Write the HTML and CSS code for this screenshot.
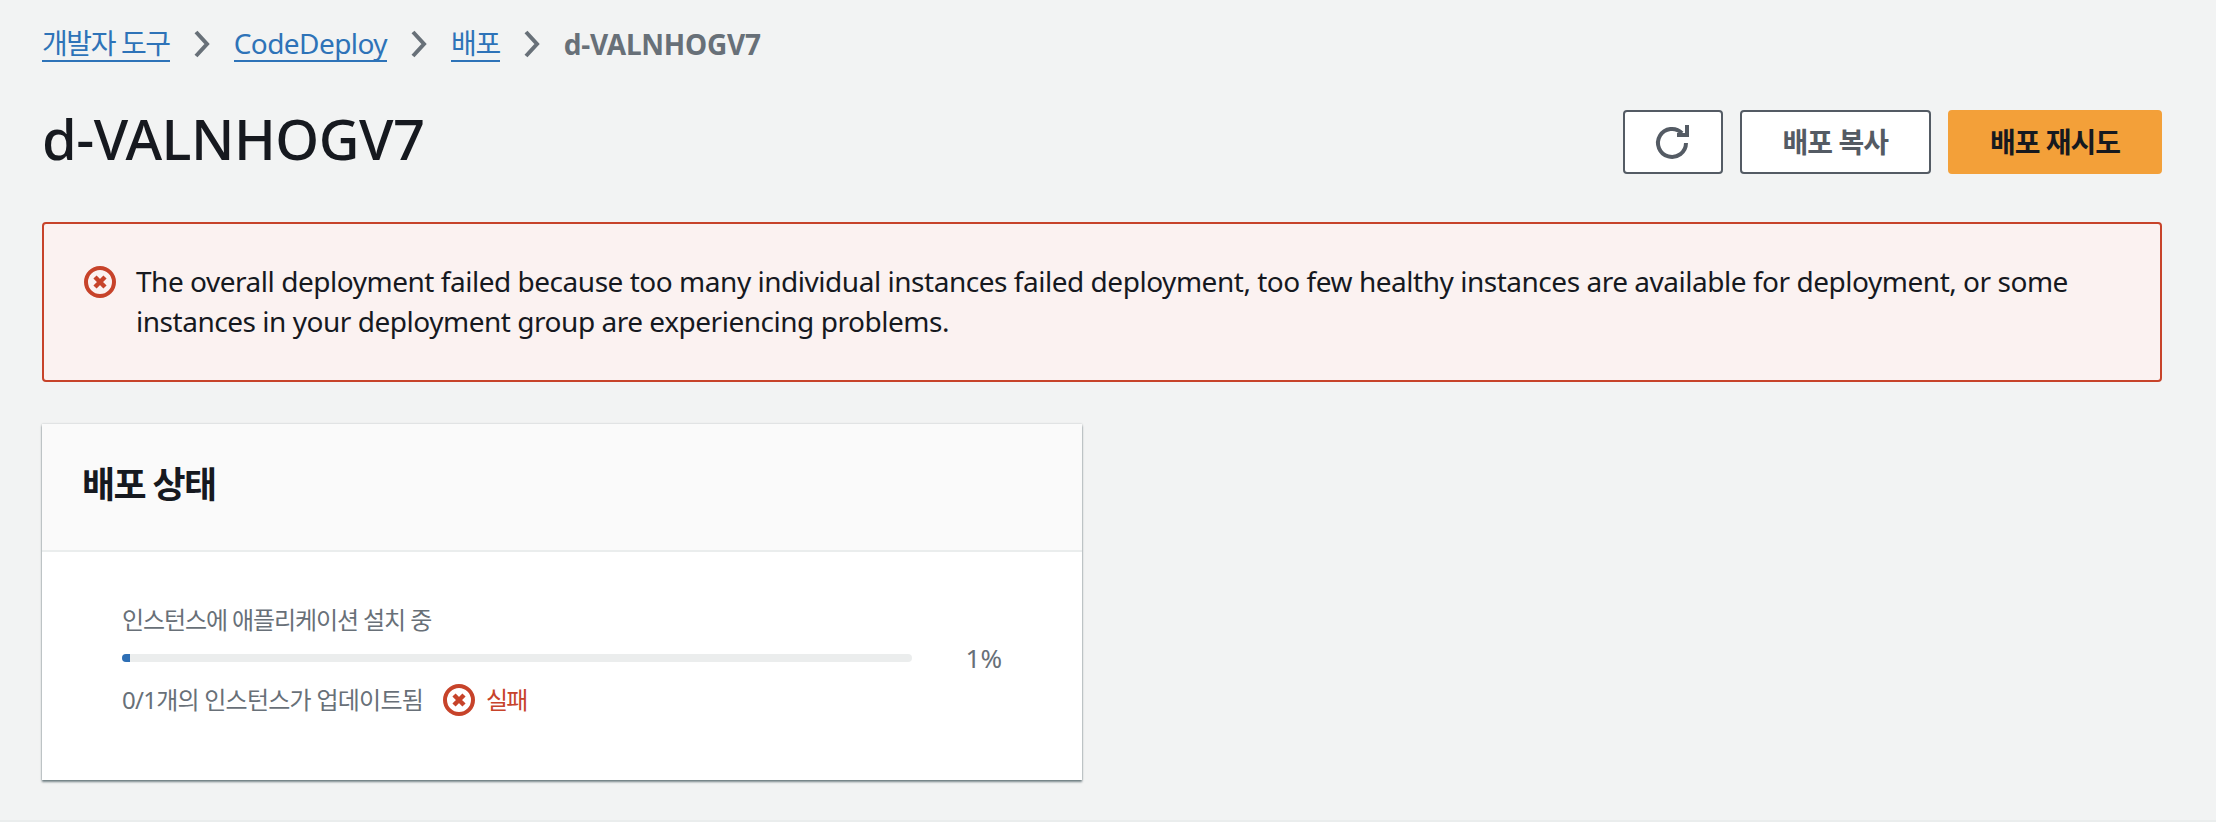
FILE: index.html
```html
<!DOCTYPE html>
<html lang="ko">
<head>
<meta charset="utf-8">
<title>d-VALNHOGV7</title>
<link rel="stylesheet" href="styles.css">
</head>
<body>
<main class="page">
  <nav class="crumbs">
    <a class="crumb crumb-ko" href="#">개발자 도구</a>
    <svg class="chev" viewBox="0 0 18 30"><path d="M3 3l11 12L3 27"/></svg>
    <a class="crumb crumb-en" href="#">CodeDeploy</a>
    <svg class="chev" viewBox="0 0 18 30"><path d="M3 3l11 12L3 27"/></svg>
    <a class="crumb crumb-ko" href="#">배포</a>
    <svg class="chev" viewBox="0 0 18 30"><path d="M3 3l11 12L3 27"/></svg>
    <span class="crumb-current">d-VALNHOGV7</span>
  </nav>
  <header class="head">
    <h1 class="title">d-VALNHOGV7</h1>
    <div class="actions">
      <button class="btn btn-icon" aria-label="새로 고침">
        <svg class="refresh" viewBox="0 0 34 34"><path d="M26 8.1A14 14 0 1 0 30 18"/><path d="M21 10H31V0"/></svg>
      </button>
      <button class="btn btn-normal">배포 복사</button>
      <button class="btn btn-primary">배포 재시도</button>
    </div>
  </header>
  <section class="alert">
    <svg class="err" viewBox="0 0 32 32"><circle cx="16" cy="16" r="14"/><path d="M11 11l10 10M21 11L11 21"/></svg>
    <p class="alert-text">The overall deployment failed because too many individual instances failed deployment, too few healthy instances are available for deployment, or some instances in your deployment group are experiencing problems.</p>
  </section>
  <section class="card">
    <h2 class="card-head">배포 상태</h2>
    <div class="card-body">
      <div class="label">인스턴스에 애플리케이션 설치 중</div>
      <div class="progress-row">
        <div class="track"><div class="fill" style="width:1%"></div></div>
        <span class="pct">1%</span>
      </div>
      <div class="status">
        <span class="status-text">0/1개의 인스턴스가 업데이트됨</span>
        <svg class="err" viewBox="0 0 32 32"><circle cx="16" cy="16" r="14"/><path d="M11 11l10 10M21 11L11 21"/></svg>
        <span class="failed">실패</span>
      </div>
    </div>
  </section>
  <div class="next-section"></div>
</main>
</body>
</html>
```
FILE: styles.css
```css
* { box-sizing: border-box; }
html, body { margin: 0; height: 822px; overflow: hidden; }
body {
  background: #f2f3f3;
  color: #16191f;
  font-family: "Noto Sans", "Noto Sans CJK KR", sans-serif;
  font-size: 28px;
  line-height: 40px;
}
.page { padding: 24px 54px 0 42px; }
.crumbs { display: flex; align-items: center; height: 40px; gap: 23px; }
.crumb { color: #2e73b8; text-decoration: none; border-bottom: 2px solid #2e73b8; line-height: 34px; height: 36px; }
.crumb-ko { letter-spacing: -1.4px; }
.crumb-en { letter-spacing: -.56px; }
.chev { width: 18px; height: 30px; fill: none; stroke: #687078; stroke-width: 4; }
.crumb-current { color: #687078; font-weight: 700; letter-spacing: -.25px; }
.head { display: flex; justify-content: space-between; align-items: center; margin-top: 46px; height: 64px; }
.title { margin: 0; padding-bottom: 8px; font-size: 56px; font-weight: 500; line-height: 64px; letter-spacing: -.5px; }
.actions { display: flex; gap: 17px; }
.btn {
  height: 64px;
  border-radius: 4px;
  font: 700 28px/40px "Noto Sans", "Noto Sans CJK KR", sans-serif;
  letter-spacing: -1px;
  padding: 0 40px;
  border: 2px solid #545b64;
  background: #fff;
  color: #545b64;
}
.btn-normal { padding: 0 41px; }
.btn-icon { width: 100px; padding: 0; display: flex; align-items: center; justify-content: center; }
.btn-primary { background: #f3a039; border-color: #f3a039; color: #16191f; }
.refresh { width: 34px; height: 34px; fill: none; stroke: #545b64; stroke-width: 4; overflow: visible; }
.alert {
  display: flex;
  gap: 20px;
  margin-top: 48px;
  height: 160px;
  padding: 37px 40px 0;
  background: #fbf2f1;
  border: 2px solid #c7432a;
  border-radius: 4px;
}
.err { width: 32px; height: 32px; flex: none; fill: none; stroke: #c7432a; stroke-width: 4; margin-top: 5px; }
.err path { stroke-width: 4.5; }
.alert-text { margin: 0; letter-spacing: -.47px; }
.card {
  width: 1040px;
  height: 356px;
  margin-top: 42px;
  background: #fff;
  box-shadow: 0 2px 2px rgba(0, 28, 36, .5), 0 0 2px rgba(0, 28, 36, .2);
}
.card-head {
  margin: 0;
  height: 128px;
  padding: 37px 40px 0;
  font-size: 36px;
  line-height: 48px;
  font-weight: 700;
  letter-spacing: -1.7px;
  background: #fafafa;
  border-bottom: 2px solid #eaeded;
}
.card-body { padding: 48px 80px 0; font-size: 24px; line-height: 40px; color: #687078; }
.label { letter-spacing: -1.1px; }
.progress-row { display: flex; align-items: center; height: 36px; gap: 54px; }
.track { width: 790px; height: 8px; background: #ebeded; border-radius: 4px; overflow: hidden; }
.fill { height: 100%; background: #2e6fb5; }
.pct { font-size: 26px; line-height: 36px; }
.status { display: flex; align-items: center; margin-top: 4px; height: 40px; }
.status-text { letter-spacing: -.75px; }
.status .err { margin: 0 11px 0 20px; }
.failed { color: #c7432a; letter-spacing: -2px; }
.next-section { height: 2px; margin: 40px -54px 0 -42px; background: #eaeded; }
```
